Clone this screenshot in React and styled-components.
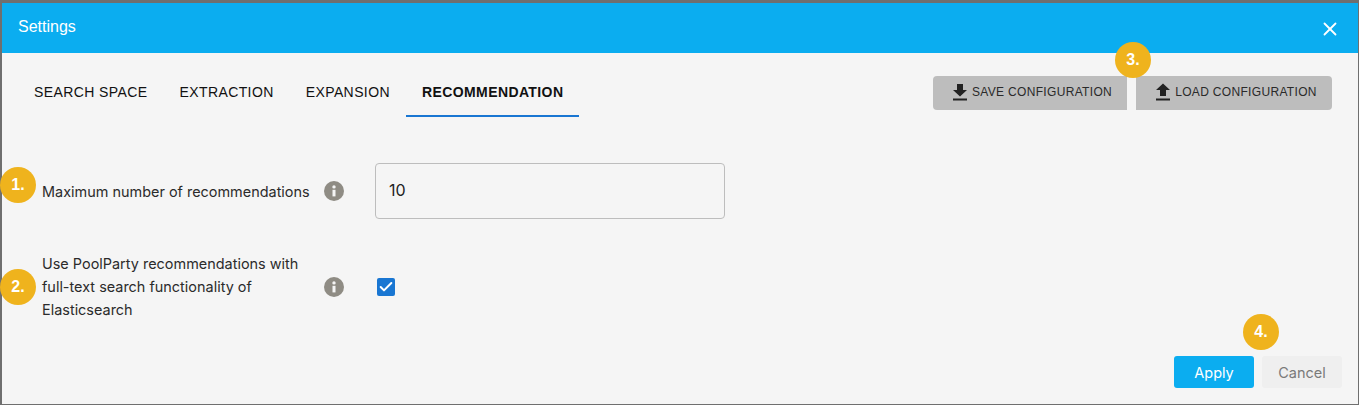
import React from "react";
import styled, { createGlobalStyle } from "styled-components";
import { Check, X } from "lucide-react";

const GlobalStyle = createGlobalStyle`
	html, body {
		margin: 0;
		padding: 0;
		background: #6f6f6f;
	}
	body {
		font-family: "Liberation Sans", Arial, sans-serif;
	}
`;

const Modal = styled.div`
	box-sizing: border-box;
	width: 1359px;
	height: 405px;
	padding: 3px 1px 1px 2px;
	display: flex;
	flex-direction: column;
	overflow: hidden;
`;

const Header = styled.header`
	height: 50px;
	flex: none;
	padding: 0 17px 0 16px;
	display: flex;
	align-items: center;
	justify-content: space-between;
	background: #0badf0;
	color: #fff;
	font-size: 16px;
`;

const Title = styled.span`
	margin-top: -2px;
`;

const Close = styled.span`
	display: flex;
	margin-top: 1px;
`;

const Body = styled.div`
	flex: 1;
	position: relative;
	background: #f5f5f5;
	display: flex;
	flex-direction: column;
`;

const TopBar = styled.div`
	display: flex;
	justify-content: space-between;
	padding: 23px 26px 0 16px;
`;

const Tabs = styled.div`
	display: flex;
	height: 41px;
`;

const Tab = styled.div`
	box-sizing: border-box;
	padding: 8px 16px 0;
	font-size: 14px;
	letter-spacing: 0.4px;
	color: #111;
	font-weight: ${(p) => (p.$active ? 700 : 400)};
	border-bottom: 2px solid ${(p) => (p.$active ? "#1976d2" : "transparent")};
`;

const Actions = styled.div`
	display: flex;
	gap: 9px;
	height: 34px;
`;

const ConfigButton = styled.div`
	box-sizing: border-box;
	width: ${(p) => p.$width}px;
	padding: 0 0 2px 4px;
	display: flex;
	align-items: center;
	justify-content: center;
	gap: 4px;
	background: #bdbdbd;
	color: #2a2a2a;
	font-size: 12px;
	letter-spacing: 0.33px;
	border-radius: ${(p) => (p.$side === "left" ? "4px 0 0 4px" : "0 4px 4px 0")};
`;

const Form = styled.div`
	display: flex;
	flex-direction: column;
	padding: 46px 0 0 40px;
	gap: 33px;
`;

const Row = styled.div`
	display: flex;
	align-items: center;
	min-height: 56px;
`;

const Label = styled.div`
	width: 282px;
	font-family: Inter, sans-serif;
	font-size: 14.45px;
	line-height: 23px;
	color: #2b2b2b;
`;

const Info = styled.span`
	width: 20px;
	height: 20px;
	border-radius: 50%;
	background: #8f8c84;
	display: flex;
	flex: none;
	margin-right: 31px;
`;

const NumberInput = styled.div`
	box-sizing: border-box;
	width: 350px;
	height: 56px;
	padding: 0 13px 2px;
	display: flex;
	align-items: center;
	border: 1px solid #bdbdbd;
	border-radius: 4px;
	font-family: Inter, sans-serif;
	font-size: 16px;
	color: #222;
`;

const Checkbox = styled.span`
	width: 18px;
	height: 18px;
	margin-left: 2px;
	border-radius: 2px;
	background: #1976d2;
	color: #fff;
	display: flex;
	align-items: center;
	justify-content: center;
`;

const Footer = styled.div`
	position: absolute;
	right: 16px;
	bottom: 16px;
	display: flex;
	gap: 8px;
`;

const FooterButton = styled.div`
	width: 80px;
	height: 32px;
	display: flex;
	align-items: center;
	justify-content: center;
	border-radius: 3px;
	font-family: Inter, sans-serif;
	font-size: 14.5px;
	background: ${(p) => (p.$primary ? "#0badf0" : "#efefef")};
	color: ${(p) => (p.$primary ? "#fff" : "#7a7a7a")};
`;

// numbered callouts sit over the page, so these are placed by coordinates
const Badge = styled.span`
	position: absolute;
	left: ${(p) => p.$x - 2}px;
	top: ${(p) => p.$y - 53}px;
	width: 36px;
	height: 36px;
	border-radius: 50%;
	background: #efb31d;
	color: #fff;
	font-weight: 700;
	font-size: 16px;
	display: flex;
	align-items: center;
	justify-content: center;
`;

const InfoIcon = () => (
	<Info>
		<svg width="20" height="20" viewBox="0 0 20 20">
			<circle cx="10" cy="5.9" r="1.7" fill="#f5f5f5" />
			<rect x="8.5" y="8.8" width="3" height="6.6" fill="#f5f5f5" />
		</svg>
	</Info>
);

const DownloadIcon = () => (
	<svg width="16" height="18" viewBox="0 0 16 18">
		<path d="M5 1h6v6h4l-7 6.5L1 7h4z M1 15.5h14v2H1z" fill="#222" />
	</svg>
);

const UploadIcon = () => (
	<svg width="16" height="18" viewBox="0 0 16 18">
		<path d="M5 13h6V7h4L8 .5 1 7h4z M1 15.5h14v2H1z" fill="#222" />
	</svg>
);

const App = () => (
	<>
		<GlobalStyle />
		<Modal>
			<Header>
				<Title>Settings</Title>
				<Close>
					<X size={22} strokeWidth={2} />
				</Close>
			</Header>
			<Body>
				<TopBar>
					<Tabs>
						<Tab>SEARCH SPACE</Tab>
						<Tab>EXTRACTION</Tab>
						<Tab>EXPANSION</Tab>
						<Tab $active>RECOMMENDATION</Tab>
					</Tabs>
					<Actions>
						<ConfigButton $width={194} $side="left">
							<DownloadIcon />
							SAVE CONFIGURATION
						</ConfigButton>
						<ConfigButton $width={196} $side="right">
							<UploadIcon />
							LOAD CONFIGURATION
						</ConfigButton>
					</Actions>
				</TopBar>
				<Form>
					<Row>
						<Label>Maximum number of recommendations</Label>
						<InfoIcon />
						<NumberInput>10</NumberInput>
					</Row>
					<Row>
						<Label>
							Use PoolParty recommendations with full-text search functionality of Elasticsearch
						</Label>
						<InfoIcon />
						<Checkbox>
							<Check size={16} strokeWidth={3} />
						</Checkbox>
					</Row>
				</Form>
				<Footer>
					<FooterButton $primary>Apply</FooterButton>
					<FooterButton>Cancel</FooterButton>
				</Footer>
				<Badge $x={0} $y={167}>1.</Badge>
				<Badge $x={0} $y={269}>2.</Badge>
				<Badge $x={1115} $y={42}>3.</Badge>
				<Badge $x={1243} $y={314}>4.</Badge>
			</Body>
		</Modal>
	</>
);

export default App;
